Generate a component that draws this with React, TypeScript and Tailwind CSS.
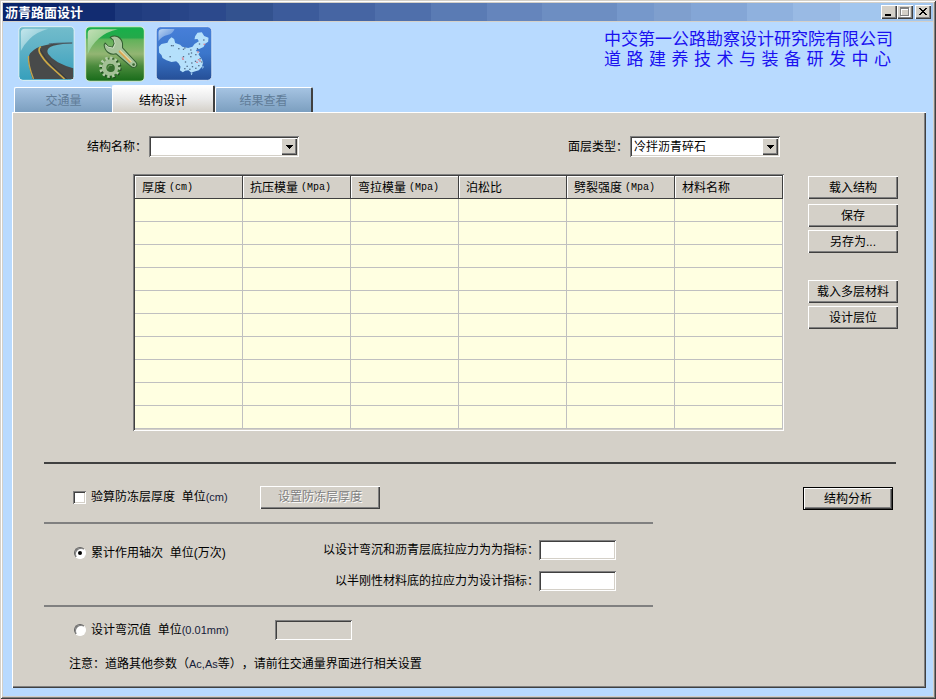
import { useState } from 'react'
import type { ReactNode } from 'react'
import clsx from 'clsx'

const raised = 'bg-[#d4d0c8] shadow-[inset_1px_1px_0_#ffffff,inset_-1px_-1px_0_#404040,inset_-2px_-2px_0_#808080]'
const sunken = 'shadow-[inset_1px_1px_0_#808080,inset_-1px_-1px_0_#ffffff,inset_2px_2px_0_#404040,inset_-2px_-2px_0_#d4d0c8]'

const surfaceTypes = ['冷拌沥青碎石', '热拌沥青碎石', '沥青混凝土']
const rows = Array.from({ length: 10 })

const columns = [
  { name: '厚度', unit: '(cm)' },
  { name: '抗压模量', unit: '(Mpa)' },
  { name: '弯拉模量', unit: '(Mpa)' },
  { name: '泊松比', unit: '' },
  { name: '劈裂强度', unit: '(Mpa)' },
  { name: '材料名称', unit: '' }
]

const tabs = [
  { id: 'traffic', label: '交通量' },
  { id: 'structure', label: '结构设计' },
  { id: 'result', label: '结果查看' }
]

const RoadIcon = () => (
  <svg viewBox="0 0 170 165" className="h-[55px] w-[57px]">
    <defs>
      <linearGradient id="roadSky" x1="0" y1="0" x2="0" y2="1">
        <stop offset="0" stopColor="#72bccb" />
        <stop offset="0.35" stopColor="#62b3c7" />
        <stop offset="1" stopColor="#369fbc" />
      </linearGradient>
      <linearGradient id="roadShine" x1="0" y1="0" x2="1" y2="1">
        <stop offset="0" stopColor="#c4e6ec" />
        <stop offset="1" stopColor="#72bccb" />
      </linearGradient>
    </defs>
    <rect x="2" y="2" width="166" height="161" rx="12" fill="url(#roadSky)" stroke="#e2f2f4" strokeWidth="3" />
    <path d="M8 75V20Q8 8 20 8H90Q55 18 35 38Q18 54 8 75Z" fill="url(#roadShine)" />
    <path d="M162 50Q110 50 84 57Q52 63 36 82Q28 94 32 115Q36 140 43 159H165V127Q140 120 119 109Q100 98 90 84Q83 72 96 63Q110 55 162 52Z" fill="#484a4a" />
    <path d="M31 90Q29 115 46 159" fill="none" stroke="#c3a44c" strokeWidth="4" />
    <path d="M68 62Q60 67 64 79Q74 100 99 123L139 159" fill="none" stroke="#d0ab45" strokeWidth="5" />
    <path d="M67 72Q78 95 103 119L147 159" fill="none" stroke="#303335" strokeWidth="2" />
    <path d="M92 54Q110 51 162 51" fill="none" stroke="#4b616d" strokeWidth="3" />
  </svg>
)

const ToolsIcon = () => (
  <svg viewBox="0 0 179 167" className="h-14 w-[60px]">
    <defs>
      <linearGradient id="toolsBg" x1="0" y1="0" x2="0" y2="1">
        <stop offset="0" stopColor="#16b04a" />
        <stop offset="0.2" stopColor="#24a94a" />
        <stop offset="0.24" stopColor="#62b25a" />
        <stop offset="0.5" stopColor="#93b573" />
        <stop offset="0.72" stopColor="#4a8a3c" />
        <stop offset="1" stopColor="#176b19" />
      </linearGradient>
      <linearGradient id="toolsShine" x1="0" y1="0" x2="1" y2="1">
        <stop offset="0" stopColor="#c2dfb5" />
        <stop offset="1" stopColor="#6cbf70" />
      </linearGradient>
    </defs>
    <rect x="2" y="2" width="175" height="163" rx="13" fill="url(#toolsBg)" stroke="#d5ecd0" strokeWidth="3" />
    <path d="M8 85V22Q8 10 22 10H98Q64 17 40 38Q18 58 8 85Z" fill="url(#toolsShine)" />
    <path
      d="M75 34Q86 27 98 32Q110 39 112 52L112 65L152 108Q158 116 151 122Q144 127 136 120L93 83Q80 87 69 79Q58 71 57 56L60 51L69 60L82 63L87 52L85 43Z"
      fill="#a8c59d" stroke="#315d30" strokeWidth="3"
    />
    <path d="M62 56L70 63L84 66L90 53L87 42" fill="none" stroke="#dce8d3" strokeWidth="2" />
    <path d="M102 74L136 108" stroke="#d9a451" strokeWidth="7" />
    <path d="M105 73L139 107" stroke="#eadcaa" strokeWidth="3" />
    <circle cx="145" cy="115" r="4" fill="#3f6b39" />
    <circle cx="77" cy="126" r="27" fill="none" stroke="#244b23" strokeWidth="10" strokeDasharray="7 7.14" />
    <circle cx="74" cy="123" r="27" fill="none" stroke="#b3cda8" strokeWidth="10" strokeDasharray="7 7.14" />
    <circle cx="75" cy="124" r="18" fill="none" stroke="#a3c096" strokeWidth="13" />
    <circle cx="77" cy="125" r="12" fill="#356d2e" />
    <path d="M68 127A9 9 0 0 1 81 118" fill="none" stroke="#6f995f" strokeWidth="3" />
  </svg>
)

const cityDots = [[46, 57], [51, 57], [68, 66], [82, 68], [86, 64], [98, 82], [104, 70], [106, 79], [119, 84], [104, 90], [130, 52], [143, 40], [124, 66], [82, 90], [88, 106], [93, 119], [107, 109], [118, 104], [132, 96], [137, 106], [128, 117], [119, 125], [101, 128], [86, 126], [42, 90], [109, 120]]
const redDots = [[125, 76], [144, 53], [79, 94], [80, 98], [127, 99], [131, 103], [122, 107]]

const ChinaMapIcon = () => (
  <svg viewBox="0 0 171 165" className="h-[55px] w-[58px]">
    <defs>
      <linearGradient id="mapBg" x1="0" y1="0" x2="0" y2="1">
        <stop offset="0" stopColor="#477fd9" />
        <stop offset="0.5" stopColor="#3b76cb" />
        <stop offset="1" stopColor="#254f97" />
      </linearGradient>
      <linearGradient id="mapShine" x1="0" y1="0" x2="1" y2="1">
        <stop offset="0" stopColor="#bad4f1" />
        <stop offset="1" stopColor="#4c83d8" />
      </linearGradient>
    </defs>
    <rect x="2" y="2" width="167" height="161" rx="13" fill="url(#mapBg)" stroke="#d3e4f8" strokeWidth="3" />
    <path d="M9 45V20Q9 9 21 9H57Q52 24 36 27Q20 30 9 45Z" fill="url(#mapShine)" />
    <path
      d="M10 62L18 54L36 50L40 41L48 34L56 39L59 51L74 56L80 62L98 66L111 62L117 54L130 46L126 39L117 40L119 31L126 20L139 19L146 30L159 35L158 47L149 53L144 63L131 69L125 69L121 75L133 78L129 85L138 98L143 109L139 123L130 133L115 137L107 140L99 133L89 134L82 139L73 133L75 122L69 112L62 106L48 108L33 103L21 96L18 87L11 80Z"
      fill="#b5e0fb"
    />
    <path d="M105 143L111 140L109 148ZM141 119L145 122L141 130Z" fill="#b5e0fb" />
    {cityDots.map(([x, y]) => <rect key={`${x}-${y}`} x={x} y={y} width="4" height="4" fill="#536e89" />)}
    {redDots.map(([x, y]) => <rect key={`${x}-${y}`} x={x} y={y} width="5" height="4" fill="#db8291" />)}
  </svg>
)

interface ButtonProps {
  children: ReactNode
  className?: string
  disabled?: boolean
}

const Button = ({ children, className, disabled }: ButtonProps) => (
  <button
    disabled={disabled}
    className={clsx('h-[23px] text-center', raised, disabled && 'text-[#808080] [text-shadow:1px_1px_0_#ffffff]', className)}
  >
    {children}
  </button>
)

interface ComboProps {
  id: string
  label: string
  options: string[]
}

const Combo = ({ id, label, options }: ComboProps) => (
  <div className="flex items-center">
    <label htmlFor={id} className="w-[62px]">{label}</label>
    <div className="relative">
      <select id={id} className={clsx('block h-[21px] w-[150px] appearance-none bg-white pr-5 pl-1 leading-4 outline-none', sunken)}>
        {options.map((option) => <option key={option}>{option}</option>)}
      </select>
      <span className={clsx('pointer-events-none absolute top-[2px] right-[2px] flex h-[17px] w-4 items-center justify-center', raised)}>
        <svg viewBox="0 0 7 4" className="h-1 w-[7px]" shapeRendering="crispEdges">
          <path d="M0 0H7V1H6V2H5V3H4V4H3V3H2V2H1V1H0Z" />
        </svg>
      </span>
    </div>
  </div>
)

const Radio = ({ checked }: { checked?: boolean }) => (
  <input
    type="radio"
    name="index"
    defaultChecked={checked}
    className="flex h-3 w-3 appearance-none items-center justify-center rounded-full border border-t-[#606060] border-r-[#ffffff] border-b-[#ffffff] border-l-[#606060] bg-white shadow-[inset_1px_1px_0_#808080] checked:before:h-1 checked:before:w-1 checked:before:rounded-full checked:before:bg-black"
  />
)

const Unit = ({ children }: { children: ReactNode }) => (
  <span className="text-[11px] text-[#15203a]">{children}</span>
)

const TitleBar = () => (
  <div className="flex h-[18px] items-center justify-between bg-[linear-gradient(90deg,#0a246a_6%,#122c71_6%_12%,#1f3b7e_12%_15%,#233f82_15%_18%,#284588_18%_20%,#2c498c_20%_24%,#33528f_24%_29%,#3c5b9b_29%_34%,#4665a3_34%_40%,#4f6fab_40%_46%,#5a7bb4_46%_52%,#6585bc_52%_58%,#6d8ec2_58%_66%,#7698cb_66%_70%,#7f9fce_70%_74%,#84a6d6_74%_80%,#8fb1de_80%_85%,#99bae4_85%_90%,#a2c6ee_90%)] pr-[2px] pl-[2px]">
    <h1 className="pt-[2px] text-[13px] leading-4 font-bold text-white">沥青路面设计</h1>
    <div className="flex">
      <button aria-label="最小化" className={clsx('h-[14px] w-4', raised)}>
        <svg viewBox="0 0 16 14" className="block" shapeRendering="crispEdges"><path d="M4 9H10V11H4Z" /></svg>
      </button>
      <button aria-label="最大化" disabled className={clsx('mr-[2px] h-[14px] w-4', raised)}>
        <svg viewBox="0 0 16 14" className="block" fill="none" shapeRendering="crispEdges">
          <path d="M4.5 3.5H12.5V11.5H4.5ZM4 4.5H12" stroke="#fff" />
          <path d="M3.5 2.5H11.5V10.5H3.5ZM3 3.5H12" stroke="#808080" />
        </svg>
      </button>
      <button aria-label="关闭" className={clsx('h-[14px] w-4', raised)}>
        <svg viewBox="0 0 16 14" className="block" shapeRendering="crispEdges">
          <path d="M4 3H6V4H7V5H9V4H10V3H12V4H11V5H10V6H9V7H10V8H11V9H12V10H10V9H9V8H7V9H6V10H4V9H5V8H6V7H7V6H6V5H5V4H4Z" />
        </svg>
      </button>
    </div>
  </div>
)

const Header = () => (
  <header className="flex h-[63px] items-start justify-between pt-1 pr-[42px] pl-[15px]">
    <div className="flex gap-[10px]">
      <RoadIcon />
      <ToolsIcon />
      <ChinaMapIcon />
    </div>
    <div className="w-[287px] pt-1 text-[17px] leading-5 whitespace-nowrap text-[#1a10f0]">
      <p>中交第一公路勘察设计研究院有限公司</p>
      <p className="[text-align-last:justify]">道 路 建 养 技 术 与 装 备 研 发 中 心</p>
    </div>
  </header>
)

const App = () => {
  const [activeTab, setActiveTab] = useState('structure')

  return (
    <div className="flex min-h-screen flex-col bg-[#b8daff] p-[3px] font-['Liberation_Sans','Noto_Sans_CJK_SC',sans-serif] text-[12px] leading-4 text-black [text-spacing-trim:space-all] shadow-[inset_1px_1px_0_#d4d0c8,inset_-1px_-1px_0_#404040,inset_2px_2px_0_#ffffff,inset_-2px_-2px_0_#808080,inset_3px_3px_0_#d4d0c8,inset_-3px_-3px_0_#d4d0c8]">
      <TitleBar />
      <div className="h-px bg-[#d4d0c8]" />
      <Header />

      <div role="tablist" className="flex items-end pl-[11px]">
        {tabs.map((tab) => {
          const active = tab.id === activeTab
          return (
            <button
              key={tab.id}
              role="tab"
              aria-selected={active}
              onClick={() => setActiveTab(tab.id)}
              className={clsx(
                'rounded-t-xs border-t border-l border-white',
                active
                  ? 'h-[27px] w-[103px] border-r-2 border-r-[#404040] bg-linear-to-b from-white via-[#ebebeb] to-[#d4d0c8] pt-1'
                  : 'h-[25px] w-[98px] bg-linear-to-b from-[#a5c3e2] to-[#7c9fc0] pt-[2px] text-[#607c98] last:border-r-2 last:border-r-[#404040]'
              )}
            >
              {tab.label}
            </button>
          )
        })}
      </div>

      <main className="mr-[7px] mb-2 ml-[9px] flex-1 bg-[#d4d0c8] px-8 pt-6 pb-3 shadow-[inset_1px_1px_0_#ffffff,inset_-1px_-1px_0_#404040,inset_-2px_-2px_0_#808080]">
        <div className="flex justify-between pr-[114px] pl-[43px]">
          <Combo id="structure-name" label="结构名称：" options={['']} />
          <Combo id="surface-type" label="面层类型：" options={surfaceTypes} />
        </div>

        <div className="mt-[17px] flex items-start gap-6 pl-[89px]">
          <div className={clsx('min-w-0 flex-1 pt-[2px] pr-px pb-[2px] pl-[2px]', sunken)}>
            <table className="w-full table-fixed border-separate border-spacing-0 bg-[#ffffe1]">
              <thead>
                <tr>
                  {columns.map((column) => (
                    <th key={column.name} className="h-[23px] border-r border-b border-[#404040] bg-[#d4d0c8] p-0 pt-[2px] pl-[7px] text-left font-normal whitespace-nowrap shadow-[inset_1px_1px_0_#ffffff]">
                      <span className="flex items-center gap-[3px]">
                        {column.name}
                        {column.unit && <span className="font-['Liberation_Mono',monospace] text-[10px]">{column.unit}</span>}
                      </span>
                    </th>
                  ))}
                </tr>
              </thead>
              <tbody>
                {rows.map((_, row) => (
                  <tr key={row}>
                    {columns.map((column) => (
                      <td key={column.name} className="h-[23px] border-r border-b border-[#c0c0c0] p-0" />
                    ))}
                  </tr>
                ))}
              </tbody>
            </table>
          </div>

          <div className="mr-[-4px] flex w-[90px] shrink-0 flex-col pt-[2px]">
            <Button>载入结构</Button>
            <Button className="mt-[5px]">保存</Button>
            <Button className="mt-[3px]">另存为...</Button>
            <Button className="mt-[27px]">载入多层材料</Button>
            <Button className="mt-[3px]">设计层位</Button>
          </div>
        </div>

        <div className="mt-[31px] mr-[-2px] h-[2px] bg-[#404040]" />

        <div className="flex items-start">
          <div className="flex-1">
            <div className="flex h-[58px] items-center pt-2 pl-[29px]">
              <label className="flex w-[187px] items-center gap-[5px]">
                <input type="checkbox" className={clsx('h-[13px] w-[13px] appearance-none bg-white', sunken)} />
                <span>验算防冻层厚度&nbsp; 单位<Unit>(cm)</Unit></span>
              </label>
              <Button disabled className="w-[120px]">设置防冻层厚度</Button>
            </div>

            <div className="flex h-[83px] items-start border-t-2 border-[#808080] pt-4 pr-[37px] pl-[30px]">
              <label className="flex items-center gap-[5px] pt-[5px]">
                <Radio checked />
                <span>累计作用轴次&nbsp; 单位(万次)</span>
              </label>
              <div className="ml-auto flex flex-col items-end gap-[11px]">
                <label className="flex items-center">
                  以设计弯沉和沥青层底拉应力为为指标：
                  <input type="text" className={clsx('h-5 w-[77px] bg-white px-1', sunken)} />
                </label>
                <label className="flex items-center">
                  以半刚性材料底的拉应力为设计指标：
                  <input type="text" className={clsx('h-5 w-[77px] bg-white px-1', sunken)} />
                </label>
              </div>
            </div>

            <div className="flex h-[47px] items-center border-t-2 border-[#808080] pl-[30px]">
              <label className="flex w-[201px] items-center gap-[5px]">
                <Radio />
                <span>设计弯沉值&nbsp; 单位<Unit>(0.01mm)</Unit></span>
              </label>
              <input
                type="text"
                disabled
                aria-label="设计弯沉值"
                className="h-5 w-[77px] shadow-[inset_1px_1px_0_#808080,inset_-1px_-1px_0_#ffffff,inset_2px_2px_0_#404040]"
              />
            </div>
            <p className="mt-1 pl-[25px]">注意：道路其他参数（<Unit>Ac,As</Unit>等），请前往交通量界面进行相关设置</p>
          </div>

          <div className="flex w-[241px] justify-end pt-[23px] pr-px">
            <button className="h-[23px] w-[90px] border border-black bg-[#d4d0c8] shadow-[inset_1px_1px_0_#ffffff,inset_-1px_-1px_0_#404040,inset_-2px_-2px_0_#808080]">
              结构分析
            </button>
          </div>
        </div>
      </main>
    </div>
  )
}

export default App
